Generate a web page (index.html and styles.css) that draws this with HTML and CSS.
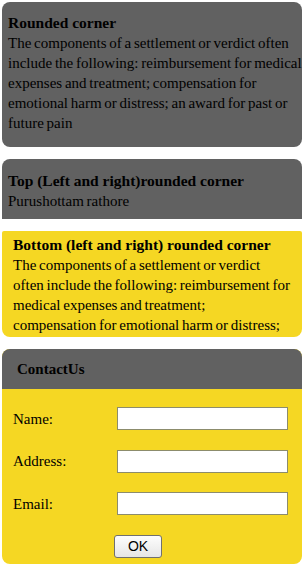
FILE: index.html
```html
<!DOCTYPE html>
<html lang="en">
<head>
<meta charset="UTF-8">
<title>Rounded corners</title>
<link rel="stylesheet" href="styles.css">
</head>
<body>
<div class="box rounded">
  <b>Rounded corner</b><br>
  The components of a settlement or verdict often include the following: reimbursement for medical expenses and treatment; compensation for emotional harm or distress; an award for past or future pain
</div>

<div class="box top-rounded">
  <b>Top (Left and right)rounded corner</b><br>
  Purushottam rathore
</div>

<div class="box bottom-rounded">
  <b>Bottom (left and right) rounded corner</b><br>
  The components of a settlement or verdict often include the following: reimbursement for medical expenses and treatment;<br>
  compensation for emotional harm or distress;
</div>

<div class="contact">
  <div class="contact-head">ContactUs</div>
  <form class="contact-form">
    <label>Name:</label><input type="text">
    <label>Address:</label><input type="text">
    <label>Email:</label><input type="text">
    <span></span><button type="button">OK</button>
  </form>
</div>
</body>
</html>
```

FILE: styles.css
```css
/* Rounded corner demo */
body {
  margin: 2px;
  font-family: "Liberation Serif", "Times New Roman", serif;
  font-size: 15px;
  line-height: 20px;
  color: #000;
  background: #fff;
}
.box {
  width: 300px;
  box-sizing: border-box;
  margin-bottom: 12px;
  word-spacing: -1px;
}
.box b {
  font-size: 15.5px;
  word-spacing: 0;
}
.rounded {
  background-color: #616161;
  border-radius: 8px;
  padding: 11px 0 14px 6px;
}
.top-rounded {
  background-color: #616161;
  border-radius: 8px 8px 0 0;
  padding: 12px 6px 8px 6px;
}
.bottom-rounded {
  background-color: #f5d723;
  border-radius: 2px 2px 8px 8px;
  padding: 4px 9px 2px 11px;
}

/* Contact box */
.contact {
  width: 300px;
  background-color: #f5d723;
  border-radius: 8px;
  overflow: hidden;
  padding-bottom: 6px;
}
.contact-head {
  background-color: #616161;
  height: 40px;
  line-height: 40px;
  padding-left: 15px;
  font-weight: bold;
}
.contact-form {
  display: grid;
  grid-template-columns: 101px 174px;
  row-gap: 19.5px;
  padding: 18px 0 0 11px;
  align-items: center;
}
.contact-form input {
  height: 23px;
  box-sizing: border-box;
  margin: 0 0 0 3px;
  border: 1px solid #8c8c6c;
  background: #fff;
}
.contact-form button {
  justify-self: start;
  width: 48px;
  height: 23px;
  font-family: "Liberation Sans", Arial, sans-serif;
  font-size: 14px;
  background: linear-gradient(#fdfdfd, #e6e6e6);
  border: 1px solid #707070;
  border-radius: 3px;
  padding: 0;
}
```
